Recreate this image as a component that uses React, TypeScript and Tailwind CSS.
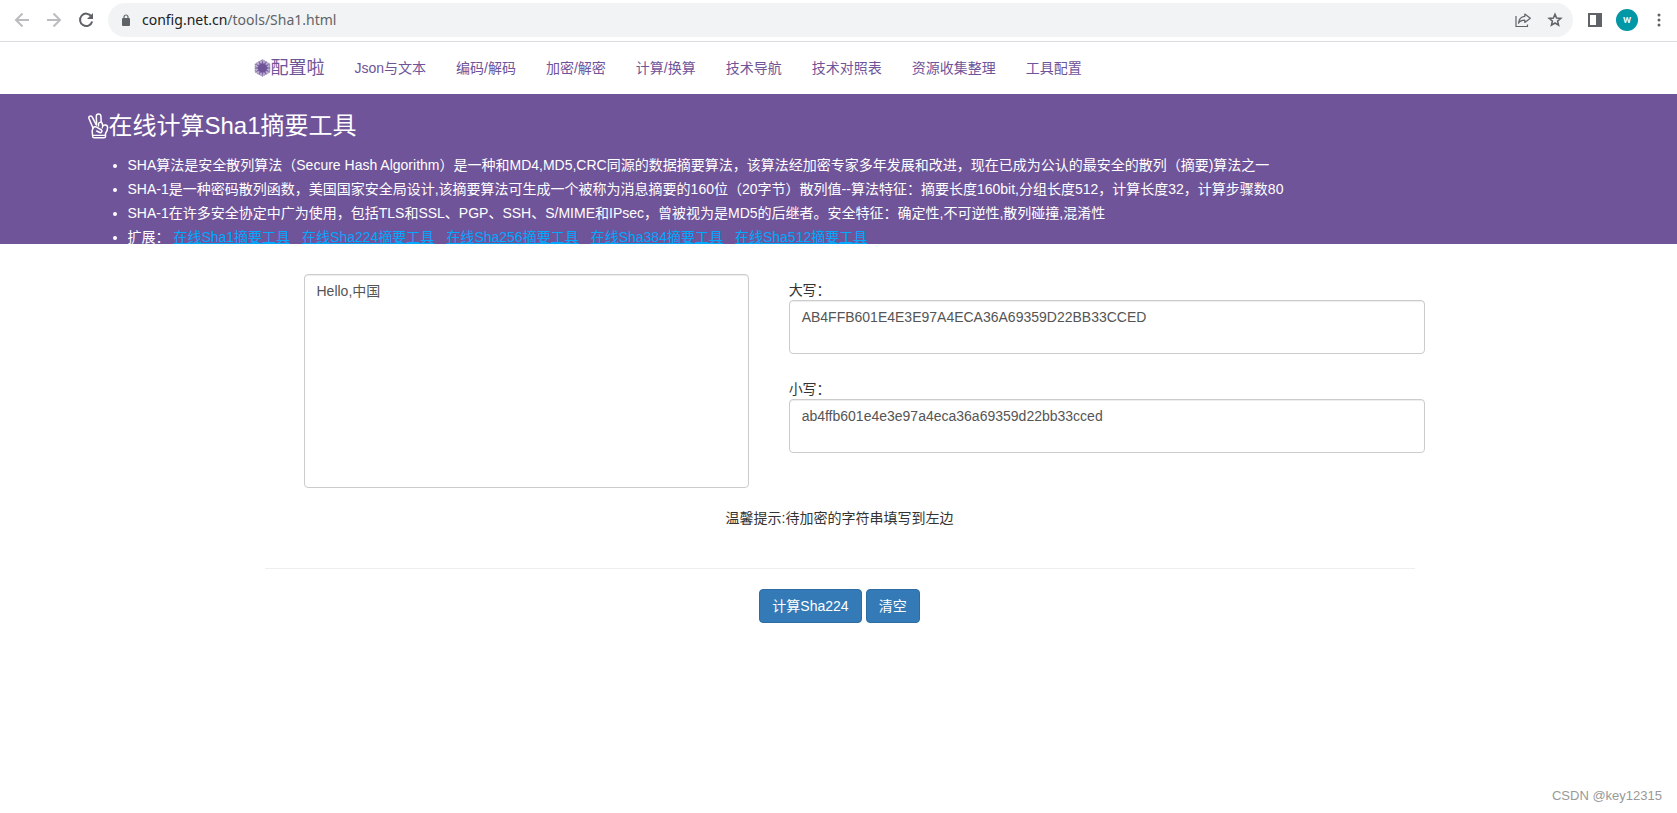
import { useState } from "react";

const NAV_ITEMS = [
  "Json与文本",
  "编码/解码",
  "加密/解密",
  "计算/换算",
  "技术导航",
  "技术对照表",
  "资源收集整理",
  "工具配置",
];

const NOTES = [
  "SHA算法是安全散列算法（Secure Hash Algorithm）是一种和MD4,MD5,CRC同源的数据摘要算法，该算法经加密专家多年发展和改进，现在已成为公认的最安全的散列（摘要)算法之一",
  "SHA-1是一种密码散列函数，美国国家安全局设计,该摘要算法可生成一个被称为消息摘要的160位（20字节）散列值--算法特征：摘要长度160bit,分组长度512，计算长度32，计算步骤数80",
  "SHA-1在许多安全协定中广为使用，包括TLS和SSL、PGP、SSH、S/MIME和IPsec，曾被视为是MD5的后继者。安全特征：确定性,不可逆性,散列碰撞,混淆性",
];

const RELATED = ["Sha1", "Sha224", "Sha256", "Sha384", "Sha512"];

const fieldClass =
  "block w-full resize-none rounded border border-[#ccc] bg-white px-3 py-1.5 text-sm leading-5 text-[#555] shadow-[inset_0_1px_1px_rgba(0,0,0,0.075)] outline-none focus:border-[#66afe9]";

const buttonClass =
  "rounded border border-[#2e6da4] bg-[#337ab7] px-3 py-1.5 text-sm leading-5 text-white hover:bg-[#286090]";

function BrowserBar() {
  return (
    <div className="flex h-[42px] items-center border-b border-[#dadce0] bg-white px-3 pb-0.5">
      <div className="flex items-center gap-3 text-[#babcbe]">
        <button aria-label="Back" className="p-0.5">
          <svg width="16" height="16" viewBox="0 0 16 16" fill="none" stroke="currentColor" strokeWidth="2">
            <path d="M15 8H2.500M8.500 1.500 2 8l6.500 6.500" />
          </svg>
        </button>
        <button aria-label="Forward" className="p-0.5">
          <svg width="16" height="16" viewBox="0 0 16 16" fill="none" stroke="currentColor" strokeWidth="2">
            <path d="M1 8h12.500M7.500 1.500 14 8l-6.500 6.500" />
          </svg>
        </button>
        <button aria-label="Reload" className="p-0.5 text-[#5f6368]">
          <svg width="16" height="16" viewBox="0 0 16 16" fill="none" stroke="currentColor" strokeWidth="2">
            <path d="M13.400 4.400A6.200 6.200 0 1 0 14.200 9.500" />
            <path d="M15 1v6H9z" fill="currentColor" stroke="none" />
          </svg>
        </button>
      </div>

      <div className="ml-3 flex h-[34px] flex-1 items-center rounded-full bg-[#f1f3f4] pr-2.5 pl-3.5">
        <svg width="8" height="12" viewBox="0 0 8 12" className="text-[#5f6368]">
          <rect y="4" width="8" height="8" rx="1" fill="currentColor" />
          <path d="M2 5V3a2 2 0 0 1 4 0v2" fill="none" stroke="currentColor" strokeWidth="1.200" />
        </svg>
        <p className="ml-3 flex-1 font-['Noto_Sans','Open_Sans',sans-serif] text-sm text-[#5f6368]">
          <span className="text-[#202124]">config.net.cn</span>/tools/Sha1.html
        </p>
        <div className="flex items-center gap-4 text-[#5f6368]">
          <button aria-label="Share">
            <svg width="16" height="16" viewBox="0 0 16 16" fill="none" stroke="currentColor" strokeWidth="1.200" strokeLinejoin="round">
              <path d="M1 4v10.500h11.500v-2" />
              <path d="M9.800 2 15.300 6.200l-5.500 4.200V8.200C7 8.200 4.800 9 3.500 11.200 3.800 7.500 6 4.700 9.800 4.300z" />
            </svg>
          </button>
          <button aria-label="Bookmark">
            <svg width="16" height="16" viewBox="0 0 16 16" fill="none" stroke="currentColor" strokeWidth="1.500">
              <path d="m8 2.200 1.600 3.900 4.200.3-3.200 2.700 1 4.100L8 11l-3.600 2.200 1-4.100-3.200-2.700 4.200-.3z" />
            </svg>
          </button>
        </div>
      </div>

      <div className="ml-[15px] flex items-center text-[#5f6368]">
        <button aria-label="Side panel">
          <svg width="14" height="14" viewBox="0 0 14 14">
            <path d="M0 0h14v14H0zM2 2v10h6V2z" fill="currentColor" fillRule="evenodd" />
          </svg>
        </button>
        <button
          aria-label="Profile"
          className="ml-3.5 flex size-[22px] items-center justify-center rounded-full bg-[#0097a7] font-[Roboto,sans-serif] text-[11px] leading-none font-medium text-white"
        >
          w
        </button>
        <button aria-label="Menu" className="ml-[15px] px-1">
          <svg width="4" height="14" viewBox="0 0 4 14" fill="currentColor">
            <circle cx="2" cy="2" r="1.500" />
            <circle cx="2" cy="7" r="1.500" />
            <circle cx="2" cy="12" r="1.500" />
          </svg>
        </button>
      </div>
    </div>
  );
}

function FlowerIcon() {
  const petals = Array.from({ length: 12 }, (_, i) => i * 30);
  return (
    <svg width="17" height="18" viewBox="0 0 17 18" fill="currentColor">
      <path d="m8.500 .3 7.700 4.400v8.600l-7.700 4.400-7.700-4.400V4.700z" opacity="0.45" />
      <path
        d="m8.500 .8 7.200 4.100v8.200l-7.200 4.100-7.200-4.100V4.900z"
        fill="none"
        stroke="currentColor"
        strokeDasharray="1 1"
        opacity="0.6"
      />
      {petals.map((deg) => (
        <path key={deg} d="M8.500 9 7.600 4l.9-3 .9 3z" opacity="0.8" transform={`rotate(${deg} 8.500 9)`} />
      ))}
      <circle cx="8.500" cy="9" r="4.500" />
    </svg>
  );
}

function VictoryHandIcon() {
  return (
    <svg
      width="21"
      height="26"
      viewBox="0 0 21 26"
      fill="none"
      stroke="currentColor"
      strokeWidth="1.500"
      strokeLinejoin="round"
      strokeLinecap="round"
    >
      <path d="M5 15 1 5.500C.2 3.200 3.200 1.900 4.300 4.100l4 7.900" />
      <path d="M8.600 11.500 8.300 3.200c0-2.900 4.200-3 4.600-.2l.3 6.500" />
      <path d="M10.500 13v-2c.2-2.500 3.600-2.300 3.900-.2l.3 2.400c.8-1.700 4.900-1.700 4.900 1.300 0 2.700-.8 4.300-2.100 6v3c0 .8-.6 1.300-1.500 1.300H6.200c-.9 0-1.500-.5-1.500-1.300 0-2.700-1.300-5 .1-8.100.8-1.700 2.600-2.100 3.900-1.300l4.600 2.800c1.500 1.200.2 3.200-1.600 2.600L8.700 18" />
      <path d="m14.700 13.200-.5 2M5.200 22.300h11.900" strokeWidth="1.200" />
    </svg>
  );
}

function SiteNav() {
  return (
    <nav className="mx-auto flex h-[52px] w-full max-w-[1170px] items-center text-[#6f5499]">
      <a href="#" className="mr-[15px] flex items-center text-lg leading-5">
        <FlowerIcon />
        配置啦
      </a>
      {NAV_ITEMS.map((item) => (
        <a key={item} href="#" className="px-[15px] text-sm leading-5 hover:underline">
          {item}
        </a>
      ))}
    </nav>
  );
}

function Intro() {
  return (
    <header className="h-[150px] overflow-hidden bg-[#6f5499] text-white">
      <div className="mx-auto max-w-[1502px] pt-[18px]">
        <h1 className="flex items-center text-2xl leading-7">
          <VictoryHandIcon />
          在线计算Sha1摘要工具
        </h1>
        <ul className="mt-[13px] list-disc pl-10 text-sm leading-6">
          {NOTES.map((note) => (
            <li key={note}>{note}</li>
          ))}
          <li>
            扩展：{" "}
            {RELATED.map((name) => (
              <a key={name} href="#" className="mr-3 text-[#00a8ff] underline">
                在线{name}摘要工具
              </a>
            ))}
          </li>
        </ul>
      </div>
    </header>
  );
}

export default function App() {
  const [source, setSource] = useState("Hello,中国");
  const [upper, setUpper] = useState("AB4FFB601E4E3E97A4ECA36A69359D22BB33CCED");
  const [lower, setLower] = useState("ab4ffb601e4e3e97a4eca36a69359d22bb33cced");

  const clear = () => {
    setSource("");
    setUpper("");
    setLower("");
  };

  return (
    <div className="flex min-h-screen flex-col bg-white font-['Liberation_Sans','Noto_Sans_CJK_SC',sans-serif] text-sm leading-5 text-[#333]">
      <BrowserBar />
      <SiteNav />
      <Intro />

      <main className="mx-auto w-full max-w-[1152px] flex-1 pt-[30px] pl-0.5">
        <div className="-mr-2.5 flex gap-10 pl-[39px]">
          <div className="flex-[7]">
            <textarea
              aria-label="待加密的字符串"
              rows={10}
              value={source}
              onChange={(e) => setSource(e.target.value)}
              className={fieldClass}
            />
          </div>
          <div className="flex flex-[10] flex-col gap-[25px] pt-1.5">
            <div>
              <label htmlFor="upper" className="block">大写：</label>
              <textarea id="upper" rows={2} readOnly value={upper} className={fieldClass} />
            </div>
            <div>
              <label htmlFor="lower" className="block">小写：</label>
              <textarea id="lower" rows={2} readOnly value={lower} className={fieldClass} />
            </div>
          </div>
        </div>

        <p className="mt-5 text-center">温馨提示:待加密的字符串填写到左边</p>
        <hr className="mt-10 border-[#eee]" />
        <div className="mt-5 flex justify-center gap-1">
          <button className={buttonClass}>计算Sha224</button>
          <button className={buttonClass} onClick={clear}>清空</button>
        </div>
      </main>

      <footer className="px-[15px] pb-[7px] text-right text-[13px] text-[#999]">CSDN @key12315</footer>
    </div>
  );
}
